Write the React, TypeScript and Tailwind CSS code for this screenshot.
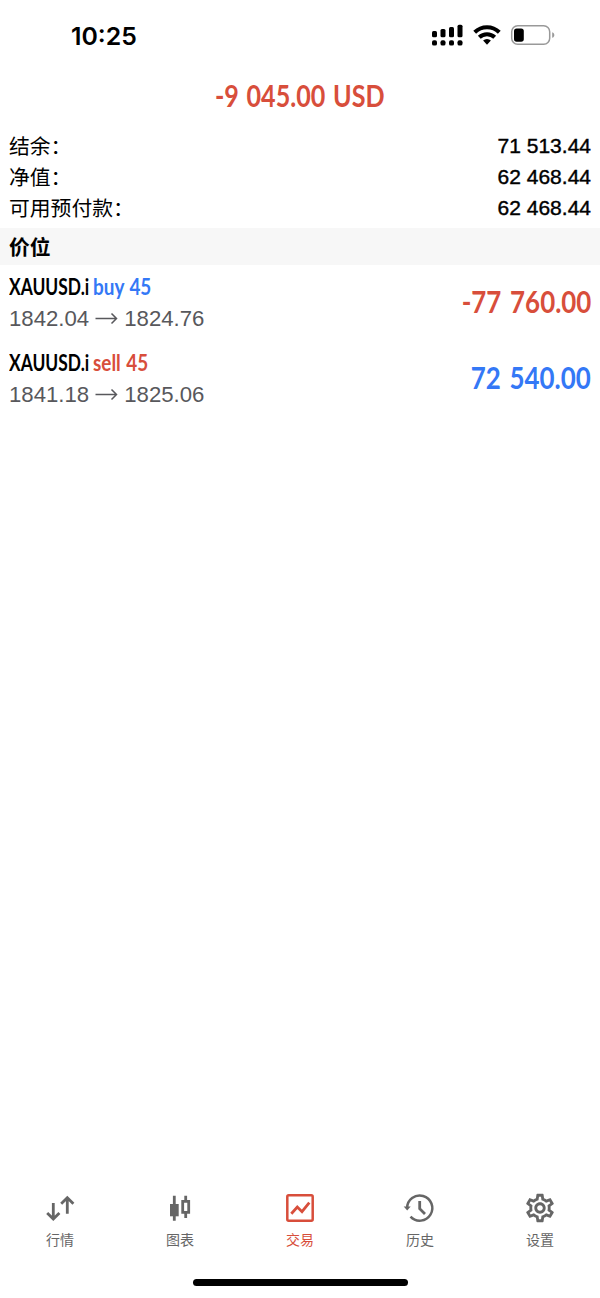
import { ReactNode } from "react";
import { MdOutlineSettings } from "react-icons/md";

type Position = {
    symbol: string;
    side: "buy" | "sell";
    volume: string;
    open: string;
    current: string;
    profit: string;
};

const balances = [
    { label: "结余：", value: "71 513.44" },
    { label: "净值：", value: "62 468.44" },
    { label: "可用预付款：", value: "62 468.44" },
];

const positions: Position[] = [
    { symbol: "XAUUSD.i", side: "buy", volume: "45", open: "1842.04", current: "1824.76", profit: "-77 760.00" },
    { symbol: "XAUUSD.i", side: "sell", volume: "45", open: "1841.18", current: "1825.06", profit: "72 540.00" },
];

function StatusBar() {
    return (
        <div className="flex h-[72px] items-center justify-between pl-[71px] pr-[44px]">
            <div className="font-['Inter'] text-[24.8px] font-semibold leading-none">10:25</div>
            <div className="flex items-center">
                <svg width="36" height="26" viewBox="0 0 36 26">
                    <rect x="2" y="8" width="5" height="6.2" rx="1.5" />
                    <rect x="10.5" y="6" width="5" height="8.2" rx="1.5" />
                    <rect x="19" y="4" width="5" height="10.2" rx="1.5" />
                    <rect x="27.5" y="1.7" width="5" height="12.5" rx="1.5" />
                    <rect x="2" y="17.3" width="5" height="5.3" rx="1.9" />
                    <rect x="10.5" y="17.3" width="5" height="5.3" rx="1.9" />
                    <rect x="19" y="17.3" width="5" height="5.3" rx="1.9" />
                    <rect x="27.5" y="17.3" width="5" height="5.3" rx="1.9" />
                </svg>
                <svg className="-mt-[2px] ml-[7px]" width="28" height="22" viewBox="0 0 28 22" fill="none" stroke="#000" strokeWidth="4">
                    <path d="M1.7 8.2a17.6 17.6 0 0 1 24.6 0" />
                    <path d="M6.3 13.3a11 11 0 0 1 15.4 0" />
                    <path d="M10.1 16.6a5.6 5.6 0 0 1 7.8 0L14 20.8z" fill="#000" stroke="none" />
                </svg>
                <svg className="-mt-[2px] ml-[9px]" width="46" height="22" viewBox="0 0 46 22">
                    <rect x="1.7" y="1.7" width="38" height="18.6" rx="6" fill="none" stroke="#999" strokeWidth="1.5" />
                    <rect x="4" y="4.5" width="9.8" height="13.2" rx="2.6" />
                    <path d="M42.2 8.2c2.8.8 2.8 4.8 0 5.6z" fill="#999" />
                </svg>
            </div>
        </div>
    );
}

function TabIcon({ children }: { children: ReactNode }) {
    return (
        <svg width="36" height="36" viewBox="0 0 36 36" fill="none" stroke="currentColor" strokeWidth="2.8">
            {children}
        </svg>
    );
}

const tabs = [
    {
        label: "行情",
        icon: (
            <TabIcon>
                <path d="M11.3 13v16M5.2 22.9l6.1 6.1 6.1-6.1M25.3 23.7v-16M19.2 13.8l6.1-6.1 6.1 6.1" />
            </TabIcon>
        ),
    },
    {
        label: "图表",
        icon: (
            <TabIcon>
                <path d="M12.3 5.7v25M23.7 5.7v5M23.7 23v5" />
                <path d="M8 14h8.7v12.3H8z" fill="currentColor" stroke="none" />
                <path d="M20.7 11.4h6v11h-6z" />
            </TabIcon>
        ),
    },
    {
        label: "交易",
        active: true,
        icon: (
            <TabIcon>
                <rect x="5.3" y="5.3" width="25.4" height="25.4" rx="1.4" strokeWidth="2.5" />
                <path d="M9.3 23.7l6-6.7 4.7 4.7 7.3-9" />
            </TabIcon>
        ),
    },
    {
        label: "历史",
        icon: (
            <TabIcon>
                <path d="M5.1 18a12.6 12.6 0 1 1 3.4 8.7" strokeWidth="2.5" />
                <path d="M1.7 16.6h7l-3.5 3.9z" fill="currentColor" stroke="none" />
                <path d="M17.7 11v7.7l5.3 5.3" />
            </TabIcon>
        ),
    },
    { label: "设置", icon: <MdOutlineSettings size={34} /> },
];

export default function App() {
    return (
        <div className="flex h-[1298px] w-[600px] flex-col bg-white font-['Liberation_Sans','Noto_Sans_CJK_SC',sans-serif] text-black">
            <StatusBar />

            <h1 className="flex h-[47px] items-center justify-center font-['Lato'] text-[31px] font-bold text-[#d84e3b]">
                <span className="scale-x-[0.81] whitespace-nowrap [word-spacing:2px]">-9 045.00 USD</span>
            </h1>

            <div className="h-[109px] px-[9px] pt-[11px]">
                {balances.map((b) => (
                    <div key={b.label} className="flex h-[31px] items-center justify-between text-[21px] leading-[31px]">
                        <span className="font-['Noto_Sans_CJK_SC'] text-[20.8px]">{b.label}</span>
                        <span className="[-webkit-text-stroke:0.4px_black]">{b.value}</span>
                    </div>
                ))}
            </div>

            <div className="flex h-[37px] items-center bg-[#f7f7f7] px-[9px] font-['Noto_Sans_CJK_SC'] text-[20.8px] font-bold leading-none">
                价位
            </div>

            <div className="flex flex-col">
                {positions.map((p) => (
                    <div key={p.side} className="flex h-[76px] items-center justify-between px-[9px]">
                        <div>
                            <div className="flex whitespace-nowrap font-['Lato'] text-[22px] font-bold leading-[32px]">
                                <span className="w-[84px] origin-left scale-x-[0.79]">{p.symbol}</span>
                                <span
                                    className={`origin-left scale-x-[0.86] [word-spacing:1px] ${
                                        p.side === "buy" ? "text-[#3478f6]" : "text-[#d84e3b]"
                                    }`}
                                >
                                    {p.side} {p.volume}
                                </span>
                            </div>
                            <div className="flex items-center text-[22.2px] leading-[32px] text-[#58585c]">
                                {p.open}
                                <svg className="mx-[6px]" width="23" height="14" viewBox="0 0 23 14" fill="none" stroke="currentColor" strokeWidth="1.5">
                                    <path d="M0.5 6.5h21M16.5 1.5l5 5-5 5" />
                                </svg>
                                {p.current}
                            </div>
                        </div>
                        <div
                            className={`-mt-[4px] origin-right scale-x-[0.835] whitespace-nowrap font-['Lato'] text-[31px] font-bold [word-spacing:3px] ${
                                p.side === "buy" ? "text-[#d84e3b]" : "text-[#3478f6]"
                            }`}
                        >
                            {p.profit}
                        </div>
                    </div>
                ))}
            </div>

            <nav className="mt-auto grid h-[89px] grid-cols-5">
                {tabs.map((t) => (
                    <div key={t.label} className={`flex flex-col items-center ${t.active ? "text-[#d84e3b]" : "text-[#666]"}`}>
                        <div className="flex h-9 items-center">{t.icon}</div>
                        <span className="mt-[3px] font-['Noto_Sans_CJK_SC'] text-[14px] leading-[20px]">{t.label}</span>
                    </div>
                ))}
            </nav>
            <div className="flex h-[19px] justify-center">
                <div className="h-[7px] w-[215px] rounded-full bg-black" />
            </div>
        </div>
    );
}
